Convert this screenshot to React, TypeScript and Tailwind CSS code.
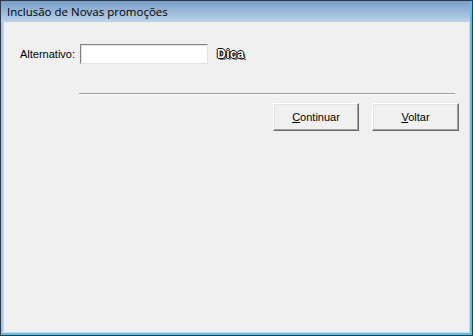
import React from 'react';

function Btn({ first, rest, w }: { first: string; rest: string; w: string }) {
  return (
    <button
      className={`${w} h-[28px] bg-[#f0f0f0] border border-t-white border-l-white border-r-[#696969] border-b-[#696969] shadow-[inset_-1px_-1px_0_#a0a0a0,inset_1px_1px_0_#e3e3e3] text-[11px] text-black`}
    >
      <span className="underline">{first}</span>
      {rest}
    </button>
  );
}

export default function App() {
  return (
    <div className="w-[473px] h-[336px] bg-[#f0f0f0] border border-[#2b3b4e] flex flex-col font-['Liberation_Sans',Arial,sans-serif]">
      {/* barra de titulo */}
      <div className="h-[21px] shrink-0 bg-gradient-to-b from-[#7a9ec5] to-[#bad2ec] flex items-center pl-[6px] border-r-2 border-r-[#56c1e6]">
        <span className="text-[11.5px] text-black font-['Open_Sans',sans-serif] leading-none">
          Inclusão de Novas promoções
        </span>
      </div>

      <div className="flex-1 flex border-l-2 border-l-[#a8c4e2] border-r-2 border-r-[#56c1e6] border-b-2 border-b-[#56c1e6]">
        <div className="flex-1 border border-[#dadada] border-t-0 pt-[22px] pl-[16px] flex flex-col">
          <div className="flex items-center h-[20px]">
            <span className="w-[60px] text-[11px] text-black">Alternativo:</span>
            <div className="w-[128px] h-[20px] bg-white border border-t-[#828282] border-l-[#828282] border-r-[#e3e3e3] border-b-[#e3e3e3] shadow-[inset_1px_1px_0_#e6e6e6]" />
            <span className="ml-[9px] text-[12px] font-bold tracking-[0.5px] text-white [text-shadow:-1px_0_0_#000,1px_0_0_#000,0_-1px_0_#000,0_1px_0_#000,2px_2px_0_#777]">
              Dica
            </span>
          </div>

          <div className="ml-[59px] mt-[29px] w-[376px] h-[2px] border-t border-t-[#a0a0a0] border-b border-b-white" />

          <div className="flex gap-[13px] ml-[253px] mt-[8px]">
            <Btn first="C" rest="ontinuar" w="w-[86px]" />
            <Btn first="V" rest="oltar" w="w-[87px]" />
          </div>
        </div>
      </div>
    </div>
  );
}
